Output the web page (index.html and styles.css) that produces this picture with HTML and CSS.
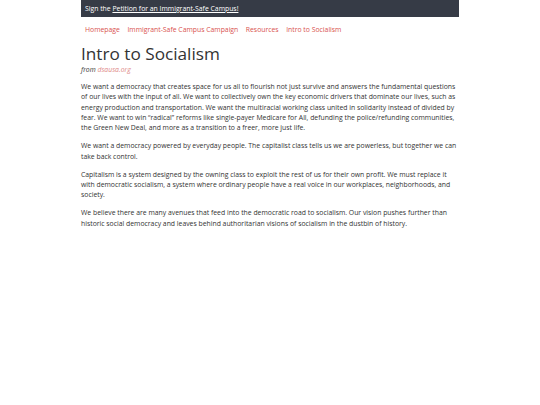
FILE: index.html
```html
<!DOCTYPE html>
<html>
<head>
<meta charset="utf-8">
<link rel="stylesheet" href="styles.css">
</head>
<body>
<div class="page">
  <div class="topbar">Sign the <a href="#">Petition for an Immigrant-Safe Campus!</a></div>
  <nav class="nav">
    <a href="#">Homepage</a>
    <a href="#">Immigrant-Safe Campus Campaign</a>
    <a href="#">Resources</a>
    <a href="#">Intro to Socialism</a>
  </nav>
  <h1 class="title">Intro to Socialism</h1>
  <p class="source">from <a href="#">dsausa.org</a></p>
  <p class="text">We want a democracy that creates space for us all to flourish not just survive and answers the fundamental questions of our lives with the input of all. We want to collectively own the key economic drivers that dominate our lives, such as energy production and transportation. We want the multiracial working class united in solidarity instead of divided by fear. We want to win “radical” reforms like single-payer Medicare for All, defunding the police/refunding communities, the Green New Deal, and more as a transition to a freer, more just life.</p>
  <p class="text">We want a democracy powered by everyday people. The capitalist class tells us we are powerless, but together we can take back control.</p>
  <p class="text">Capitalism is a system designed by the owning class to exploit the rest of us for their own profit. We must replace it with democratic socialism, a system where ordinary people have a real voice in our workplaces, neighborhoods, and society.</p>
  <p class="text">We believe there are many avenues that feed into the democratic road to socialism. Our vision pushes further than historic social democracy and leaves behind authoritarian visions of socialism in the dustbin of history.</p>
</div>
</body>
</html>
```
FILE: styles.css
```css
html, body {
  margin: 0;
  padding: 0;
  background: #ffffff;
}
body {
  font-family: "Open Sans", "Noto Sans", sans-serif;
  color: #333333;
}
.page {
  width: 378px;
  margin: 0 auto;
  padding: 0;
}
.topbar {
  background: #363b46;
  color: #ffffff;
  font-size: 6.85px;
  line-height: 17px;
  height: 17px;
  padding: 0 4px;
}
.topbar a {
  color: #ffffff;
  text-decoration: underline;
}
.nav {
  display: flex;
  gap: 7.5px;
  padding: 8px 4px 0;
  font-size: 6.85px;
  line-height: 10px;
}
.nav a {
  color: #d9534f;
  text-decoration: none;
}
.title {
  font-size: 17.2px;
  font-weight: 400;
  line-height: 22px;
  margin: 8px 0 0;
  color: #333333;
}
.source {
  font-size: 6.85px;
  font-style: italic;
  margin: 0 0 8px;
  line-height: 9px;
}
.source a {
  color: #e08a88;
  text-decoration: none;
}
.text {
  font-size: 6.85px;
  line-height: 10.3px;
  margin: 0 0 7.8px;
}
```
